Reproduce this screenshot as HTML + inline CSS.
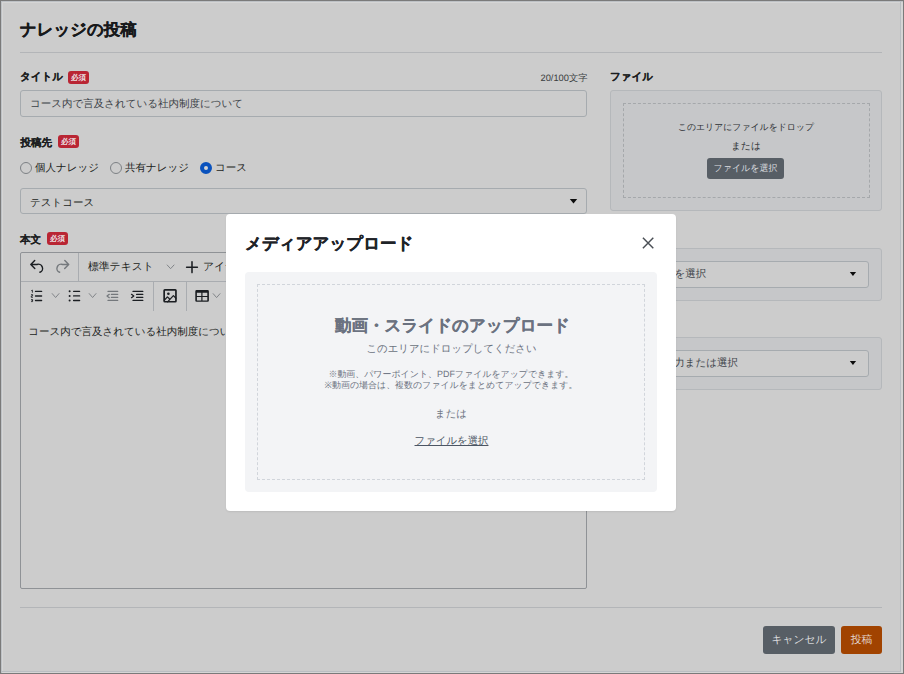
<!DOCTYPE html>
<html><head><meta charset="utf-8">
<style>
*{box-sizing:border-box;margin:0;padding:0}
html,body{width:904px;height:674px;overflow:hidden}
body{position:relative;background:#cccccc;font-family:"Liberation Sans",sans-serif;color:#1b1d20;text-rendering:geometricPrecision}
.a{position:absolute;white-space:nowrap}
.lbl{font-size:10.5px;font-weight:bold;line-height:12px;color:#1b1d20;-webkit-text-stroke:0.15px #1b1d20}
.badge{position:absolute;width:21px;height:13px;background:#b92533;border-radius:3px;color:#eadfe0;font-size:7.5px;font-weight:bold;line-height:13px;text-align:center}
.inp{position:absolute;border:1px solid #a6abaf;border-radius:3px;background:#cccccc}
.txt{font-size:10.5px;line-height:12px;color:#3a4046}
.caret{position:absolute;width:0;height:0;border-left:4px solid transparent;border-right:4px solid transparent;border-top:4px solid #111}
.frame{position:absolute;left:0;top:0;width:904px;height:674px;border:1px solid #7a7a7a;pointer-events:none;box-shadow:inset 1px 1px 0 #bdc1c5,inset -2px -1px 0 #d5d5d5,inset -3px -2px 0 #babec2,inset 2px 2px 0 #d5d5d5}

.hr{position:absolute;height:1px;background:#b3b5b8}
</style></head><body>

<!-- title -->
<div class="a" style="left:20px;top:19.6px;font-size:16.4px;font-weight:bold;line-height:20px;color:#18191b;-webkit-text-stroke:0.25px #18191b">ナレッジの投稿</div>
<div class="hr" style="left:20px;top:52px;width:862px"></div>

<!-- タイトル -->
<div class="a lbl" style="left:20px;top:71px">タイトル</div>
<div class="badge" style="left:68px;top:71px">必須</div>
<div class="a" style="left:520px;top:72.5px;width:67.5px;text-align:right;font-size:9.3px;line-height:10px;color:#3a3d40">20/100文字</div>
<div class="inp" style="left:20px;top:90px;width:567px;height:27px"></div>
<div class="a txt" style="left:30px;top:98px">コース内で言及されている社内制度について</div>

<!-- 投稿先 -->
<div class="a lbl" style="left:20.5px;top:136.5px">投稿先</div>
<div class="badge" style="left:58px;top:135px">必須</div>

<div class="a" style="left:20px;top:162px;width:12px;height:12px;border:1px solid #7d8185;border-radius:50%"></div>
<div class="a txt" style="left:35px;top:162px;color:#1b1d20">個人ナレッジ</div>
<div class="a" style="left:110px;top:162px;width:12px;height:12px;border:1px solid #7d8185;border-radius:50%"></div>
<div class="a txt" style="left:125px;top:162px;color:#1b1d20">共有ナレッジ</div>
<div class="a" style="left:200px;top:162px;width:12px;height:12px;border:4.1px solid #0a52bd;border-radius:50%;background:#d4d4d4"></div>
<div class="a txt" style="left:215px;top:162px;color:#1b1d20">コース</div>

<div class="inp" style="left:20px;top:188px;width:567px;height:26px"></div>
<div class="a txt" style="left:30px;top:197px;color:#1b1d20">テストコース</div>
<svg class="a" style="left:569px;top:198px" width="10" height="8"><path d="M0.8 1 H8.2 L4.5 5.6 Z" fill="#0d0d0d"/></svg>

<!-- 本文 -->
<div class="a lbl" style="left:20px;top:234px">本文</div>
<div class="badge" style="left:47px;top:232px">必須</div>
<div class="inp" style="left:20px;top:252px;width:567px;height:337px;border-color:#8f9296;border-radius:2px"></div>
<div class="hr" style="left:21px;top:281px;width:565px;background:#a9acb0"></div>

<!-- right column -->
<div class="a lbl" style="left:610px;top:71px">ファイル</div>
<div class="a" style="left:610px;top:90px;width:272px;height:121px;border:1px solid #b5b8bb;border-radius:3px;background:#c6c7c9"></div>
<div class="a" style="left:623px;top:103px;width:247px;height:95px;border:1px dashed #a5a8ab"></div>

<div class="a" style="left:610px;top:248px;width:272px;height:53px;border:1px solid #b5b8bb;border-radius:3px;background:#c6c7c9"></div>
<div class="inp" style="left:623px;top:261px;width:246px;height:27px"></div>
<svg class="a" style="left:849px;top:271px" width="10" height="8"><path d="M0.8 1 H7.1 L3.95 5.1 Z" fill="#0d0d0d"/></svg>
<div class="a" style="left:610px;top:337px;width:272px;height:53px;border:1px solid #b5b8bb;border-radius:3px;background:#c6c7c9"></div>
<div class="inp" style="left:623px;top:350px;width:246px;height:27px"></div>
<svg class="a" style="left:849px;top:360px" width="10" height="8"><path d="M0.8 1 H7.1 L3.95 5.1 Z" fill="#0d0d0d"/></svg>

<!-- footer -->
<div class="hr" style="left:20px;top:607px;width:862px"></div>
<div class="a" style="left:763px;top:626px;width:72px;height:28px;background:#575e65;border-radius:3px"></div>
<div class="a" style="left:841px;top:626px;width:41px;height:28px;background:#a14300;border-radius:3px"></div>


<!-- editor toolbar -->
<div class="hr" style="left:78px;top:253px;width:1px;height:28px;background:#a9acb0"></div>
<div class="hr" style="left:153px;top:282px;width:1px;height:29px;background:#a9acb0"></div>
<div class="hr" style="left:186px;top:282px;width:1px;height:29px;background:#a9acb0"></div>
<div class="a" style="left:88px;top:261px;font-size:10.8px;line-height:12px;color:#1b1d20">標準テキスト</div>
<div class="a" style="left:203px;top:261px;font-size:10.8px;line-height:12px;color:#1b1d20">アイテム</div>
<div class="a txt" style="left:28.2px;top:325.6px;color:#1b1d20">コース内で言及されている社内制度について</div>
<svg class="a" style="left:0;top:0" width="904" height="674" viewBox="0 0 904 674" fill="none" stroke-linecap="round" stroke-linejoin="round">
 <g stroke="#1b1e22" stroke-width="1.45">
  <path d="M34.7 260.6 L30.8 264.5 L34.8 268.4 M30.8 264.5 H36.9 A4.1 4.1 0 0 1 39.9 272.3"/>
 </g>
 <g stroke="#1b1e22" stroke-width="1.35">
  <path d="M35.5 291.4 H41.6 M35.5 296 H41.6 M35.5 300.5 H41.6"/>
  <path d="M73.6 291.3 H79.6 M73.6 295.9 H79.6 M73.6 300.5 H79.6"/>
  <path d="M133 291.4 H142.8 M136.6 294.4 H142.8 M136.6 297.4 H142.8 M133 300.4 H142.8 M131.5 294.3 L133.8 296 L131.5 297.7" stroke-width="1.25"/>
  <path d="M192 261.8 V272.6 M186.6 267.2 H197.4" stroke-width="1.55"/>
  <path d="M164.3 300.2 L167.4 296.9 L169.4 298.8 M167.6 301.9 L173.4 295.6 L176 298.2" stroke-width="1.25"/>
 </g>
 <g stroke="#1b1e22" stroke-width="0.85" stroke-linecap="butt" stroke-linejoin="miter">
  <path d="M31.3 290.6 L32.4 290.1 V292.7"/>
  <path d="M31.1 294.6 H32.6 V295.9 H31.3 V297.3 H32.9"/>
  <path d="M31.1 299.5 H32.6 V301.6 H31.1 M31.6 300.5 H32.6"/>
 </g>
 <g fill="#1b1e22" stroke="none">
  <path fill-rule="evenodd" d="M164.8 289 H175.3 Q176.8 289 176.8 290.5 V301.1 Q176.8 302.6 175.3 302.6 H164.8 Q163.3 302.6 163.3 301.1 V290.5 Q163.3 289 164.8 289 Z M165 290.7 V300.9 H175.1 V290.7 Z"/>
  <circle cx="168.4" cy="293.7" r="1.3"/>
  <path fill-rule="evenodd" d="M196.6 290.1 H207.6 Q208.9 290.1 208.9 291.4 V300.5 Q208.9 301.8 207.6 301.8 H196.6 Q195.3 301.8 195.3 300.5 V291.4 Q195.3 290.1 196.6 290.1 Z M196.9 292.7 V296 H201.3 V292.7 Z M202.5 292.7 V296 H207.3 V292.7 Z M196.9 297.1 V300.4 H201.3 V297.1 Z M202.5 297.1 V300.4 H207.3 V297.1 Z"/>
  <circle cx="69.6" cy="291.3" r="1"/><circle cx="69.6" cy="295.9" r="1"/><circle cx="69.6" cy="300.5" r="1"/>
 </g>
 <g stroke="#74787c" stroke-width="1.45">
  <path d="M60.6 260.6 L64.5 264.5 L60.5 268.4 M64.5 264.5 H58.4 A4.1 4.1 0 0 0 55.4 272.3" transform="translate(4.2,0)"/>
 </g>
 <g stroke="#74787c" stroke-width="1.25">
  <path d="M108 291.4 H117.7 M111.4 294.4 H117.7 M111.4 297.4 H117.7 M108 300.4 H117.7 M109.3 294.3 L107 296 L109.3 297.7"/>
 </g>
 <g stroke="#7d8185" stroke-width="0.95">
  <path d="M167.2 265 L170.6 268.7 L174 265"/>
  <path d="M52.2 293.6 L55.6 297.5 L59 293.6"/>
  <path d="M89.2 293.6 L92.6 297.5 L96 293.6"/>
  <path d="M213.2 293.7 L216.6 297.6 L220 293.7"/>
 </g>
</svg>

<!-- right column texts -->
<div class="a" style="left:610px;top:121.5px;width:272px;text-align:center;font-size:8.9px;line-height:10px;color:#2c2f33">このエリアにファイルをドロップ</div>
<div class="a" style="left:610px;top:141.5px;width:272px;text-align:center;font-size:9.6px;line-height:10px;color:#2c2f33">または</div>
<div class="a" style="left:707px;top:158px;width:77px;height:21px;background:#575e65;border-radius:3px;color:#dedfe0;font-size:9px;line-height:20px;text-align:center">ファイルを選択</div>
<div class="a txt" style="left:631.5px;top:268px;color:#3f454b">カテゴリを選択</div>
<div class="a txt" style="left:631.5px;top:357px;color:#3f454b">タグを入力または選択</div>

<!-- footer buttons text -->
<div class="a" style="left:763px;top:626px;width:72px;height:28px;color:#dcdddf;font-size:10.8px;line-height:28px;text-align:center">キャンセル</div>
<div class="a" style="left:841px;top:626px;width:41px;height:28px;color:#e3d6cf;font-size:10.8px;line-height:28px;text-align:center">投稿</div>

<!-- modal -->
<div class="a" style="left:226px;top:214px;width:450px;height:297px;background:#fff;border-radius:4px;box-shadow:0 1px 2px rgba(0,0,0,.08)"></div>
<div class="a" style="left:245px;top:234px;font-size:16.5px;font-weight:bold;line-height:20px;color:#1f2328;-webkit-text-stroke:0.3px #1f2328">メディアアップロード</div>
<svg class="a" style="left:640px;top:235px" width="16" height="16" viewBox="0 0 16 16"><path d="M2.9 2.8 L13.3 13.2 M13.3 2.8 L2.9 13.2" stroke="#4a4f55" stroke-width="1.45" fill="none"/></svg>
<div class="a" style="left:245px;top:272px;width:412px;height:220px;background:#f3f4f6;border-radius:4px"></div>
<div class="a" style="left:257px;top:284px;width:388px;height:196px;border:1px dashed #d1d5db"></div>
<div class="a" style="left:246.5px;top:316px;width:412px;text-align:center;font-size:16.5px;font-weight:bold;line-height:20px;color:#6b7280;-webkit-text-stroke:0.2px #6b7280">動画・スライドのアップロード</div>
<div class="a" style="left:245.5px;top:344px;width:412px;text-align:center;font-size:10.4px;line-height:12px;color:#6b7280">このエリアにドロップしてください</div>
<div class="a" style="left:245px;top:369px;width:412px;text-align:center;font-size:8.95px;line-height:11px;color:#6b7280">※動画、パワーポイント、PDFファイルをアップできます。<br>※動画の場合は、複数のファイルをまとめてアップできます。</div>
<div class="a" style="left:245px;top:409px;width:412px;text-align:center;font-size:10.4px;line-height:12px;color:#6b7280">または</div>
<div class="a" style="left:245.5px;top:436px;width:412px;text-align:center;font-size:10.4px;line-height:12px;color:#4b5563"><span style="text-decoration:underline">ファイルを選択</span></div>

<div class="frame"></div>
</body></html>
